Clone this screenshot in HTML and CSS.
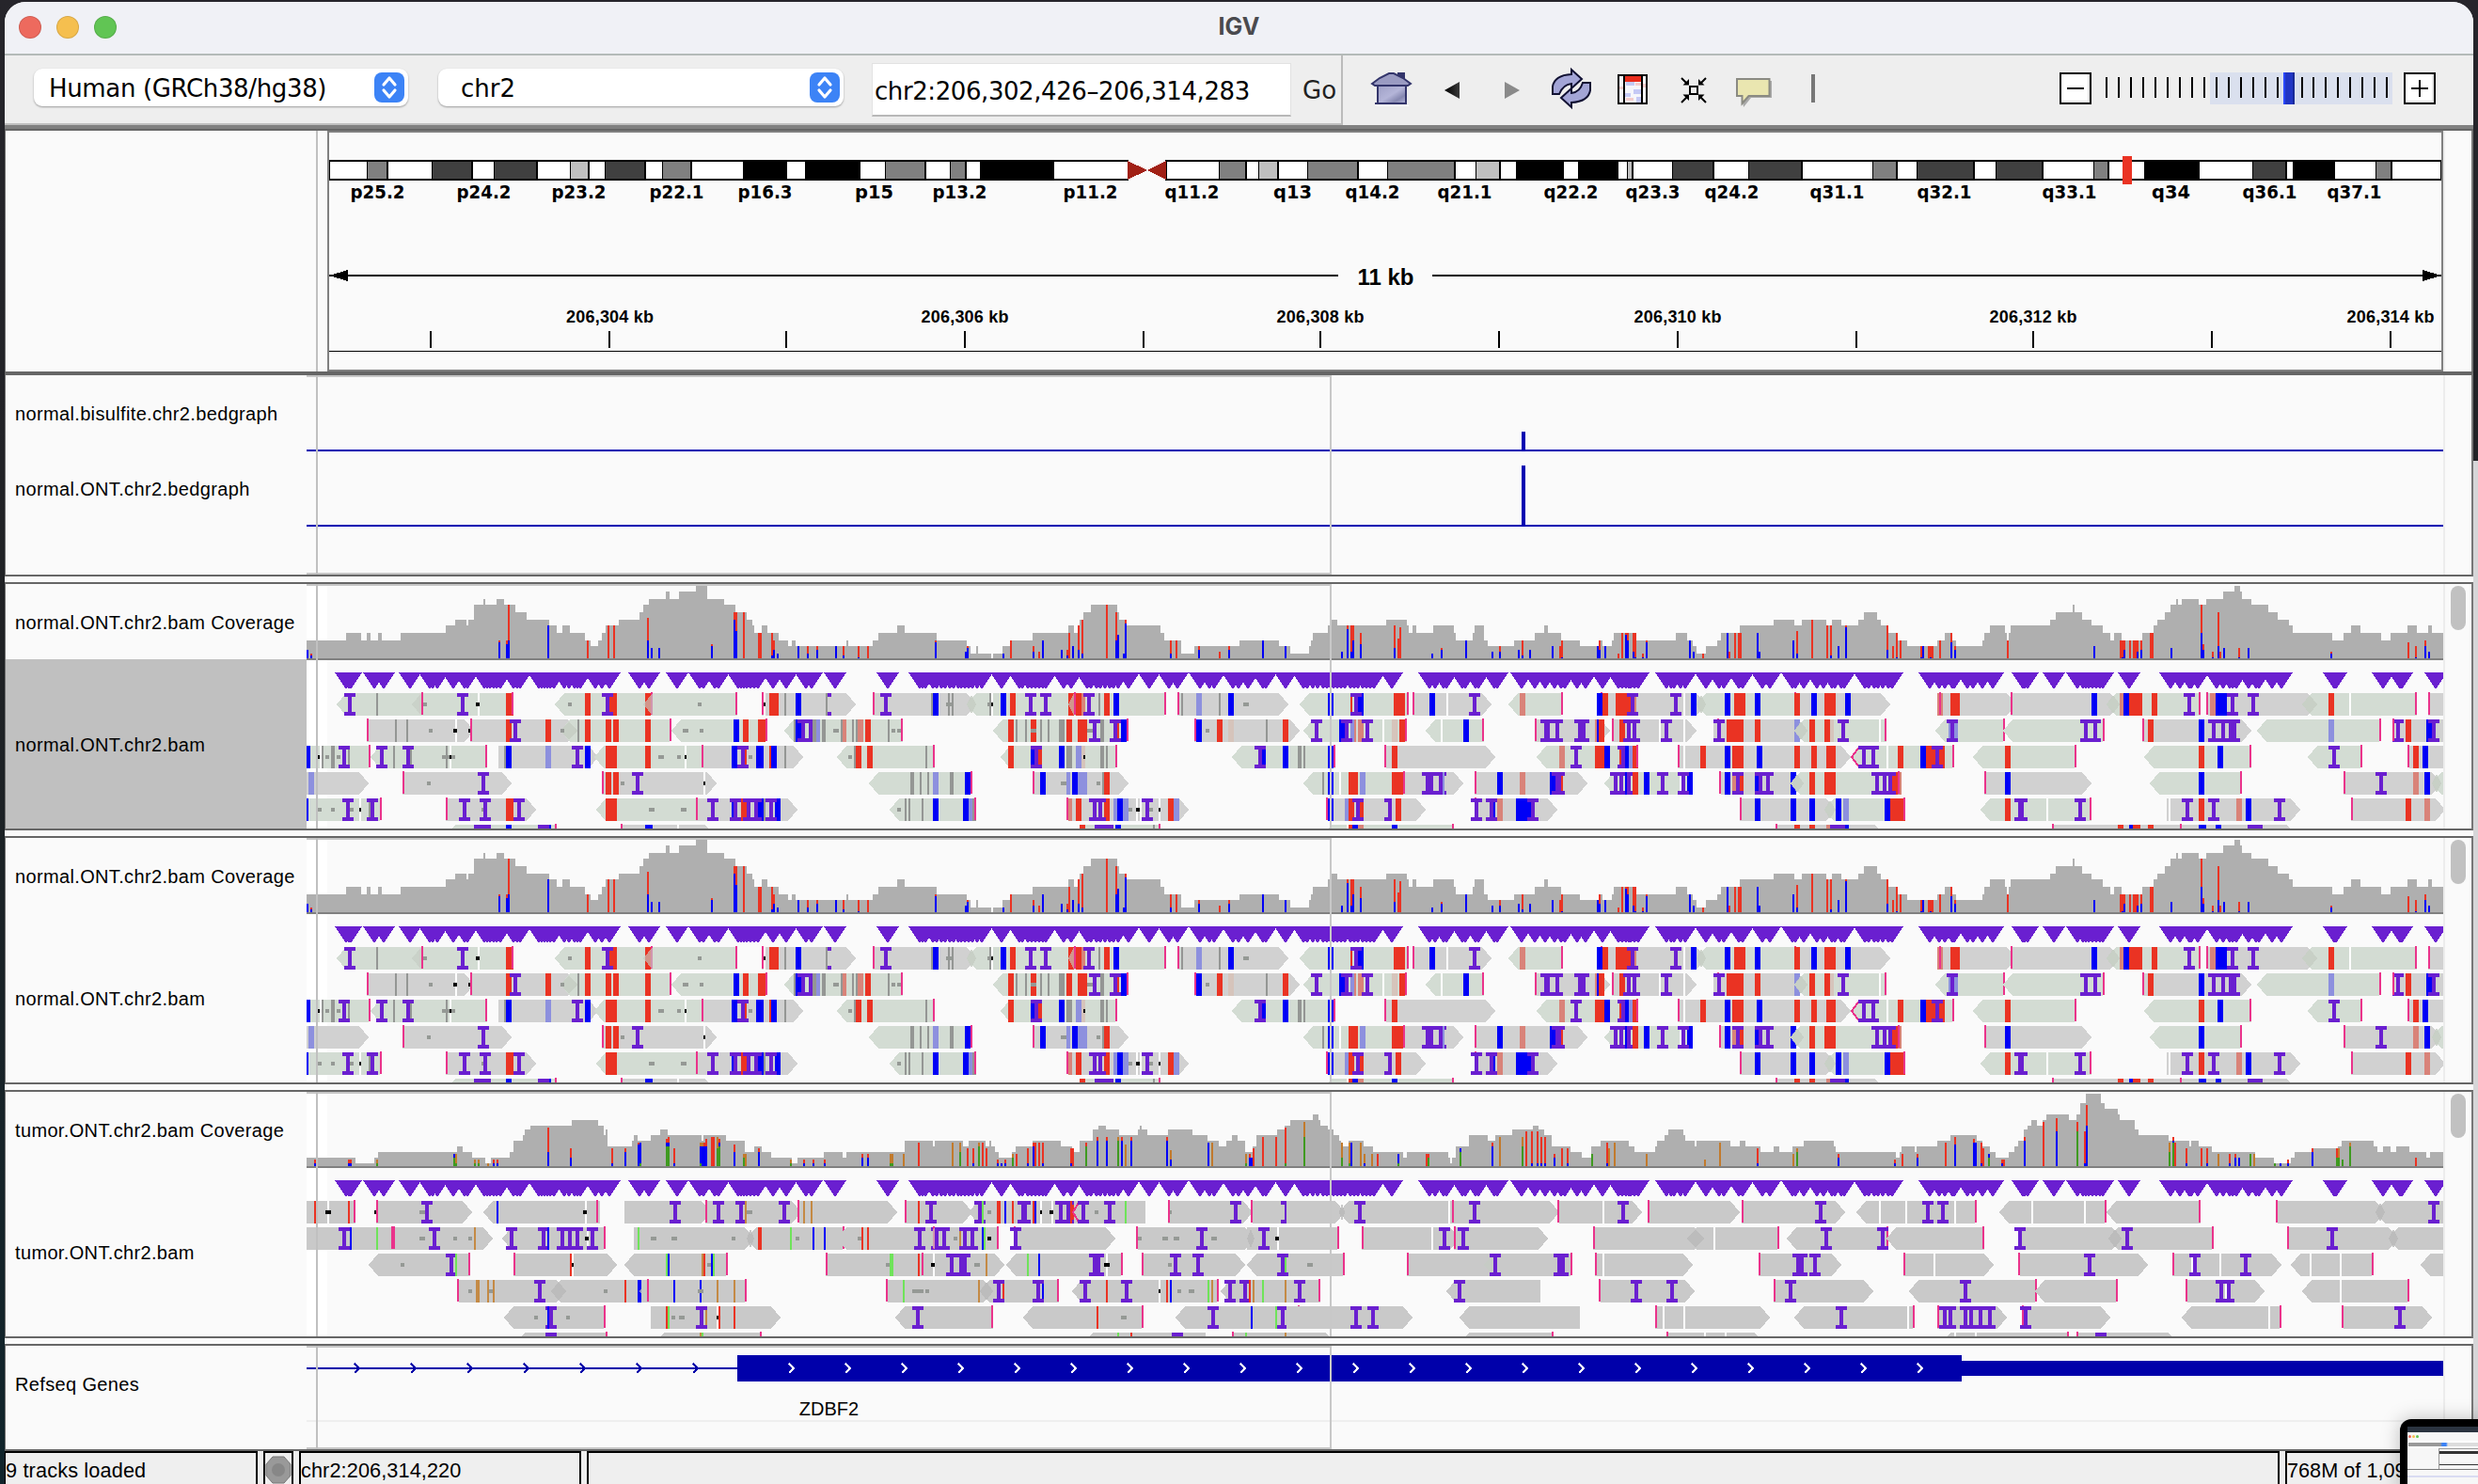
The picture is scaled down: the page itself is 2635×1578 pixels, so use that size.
FILE: index.html
```html
<!DOCTYPE html>
<html lang="en">
<head>
<meta charset="utf-8">
<title>IGV</title>
<link rel="stylesheet" href="styles.css">
</head>
<body>
<div class="window">
  <header class="titlebar">
    <div class="lights"><i class="light close"></i><i class="light min"></i><i class="light max"></i></div>
    <div class="title">IGV</div>
  </header>

  <div class="toolbar">
    <div class="locus-group">
      <div class="select genome"><span>Human (GRCh38/hg38)</span><svg class="stepper" width="32" height="32" viewBox="0 0 32 32"><rect width="32" height="32" rx="8"/><path d="M10 13l6-7 6 7M10 19l6 7 6-7"/></svg></div>
      <div class="select chrom"><span>chr2</span><svg class="stepper" width="32" height="32" viewBox="0 0 32 32"><rect width="32" height="32" rx="8"/><path d="M10 13l6-7 6 7M10 19l6 7 6-7"/></svg></div>
      <div class="locus"><span>chr2:206,302,426–206,314,283</span></div>
      <div class="go">Go</div>
    </div>
    <svg class="icons" width="520" height="72" viewBox="1430 59 520 72">
      <defs>
        <linearGradient id="wall" x1="0" y1="0" x2="1" y2="1"><stop offset="0" stop-color="#9fa0c6"/><stop offset=".5" stop-color="#b4b5d8"/><stop offset=".75" stop-color="#8587b0"/><stop offset="1" stop-color="#b4b5d8"/></linearGradient>
        <linearGradient id="dark" x1="0" x2="1"><stop offset="0" stop-color="#000"/><stop offset="1" stop-color="#3a3a3a"/></linearGradient>
      </defs>
      <path d="M1486 77h8v14h-8z" fill="#33356b"/>
      <path d="M1459 89l8-6 10-5h5l10 5 8 6-3 2h-35z" fill="#9a9bc2" stroke="#33356b" stroke-width="2"/>
      <path d="M1465 91h30v19h-30z" fill="url(#wall)" stroke="#33356b" stroke-width="2"/>
      <path d="M1462 110h34" stroke="#33356b" stroke-width="2"/>
      <path d="M1464 112.500h34" stroke="#fff" stroke-width="1"/>
      <path d="M1536 96l16-9v18z" fill="url(#dark)"/>
      <path d="M1616 96l-16-9v18z" fill="#8a8a8a"/>
      <g stroke="#111133" stroke-width="2" fill="#a3a5d6" stroke-linejoin="miter">
        <path d="M1651 100v-8q2-12 20-13v-5l11 10-11 10v-5q-9 1-13 11z"/>
        <path d="M1691 88v8q-2 12-20 13v5l-11-10 11-10v5q9-1 12-11z"/>
      </g>
      <rect x="1721" y="80" width="30" height="30" fill="#f6f6fb" stroke="#000" stroke-width="2"/>
      <path d="M1729 87h9v4h-9zM1737 95h8v5h-8zM1740 103h5v6h-5zM1728 99h6v4h-6z" fill="#c5c9f5"/>
      <path d="M1729 104h8v3h-8zM1739 88h6v3h-6zM1722 92h4v3h-4zM1747 89h3v4h-3z" fill="#f3cdcd"/>
      <path d="M1728 81h17v6h-17z" fill="#ea2c1c"/>
      <path d="M1727 80v30M1746 80v30" stroke="#000" stroke-width="2"/>
      <g stroke="#000" stroke-width="2" fill="none"><rect x="1797" y="92" width="8" height="8"/><path d="M1788 83l6 6M1814 83l-6 6M1788 109l6-6M1814 109l-6-6"/></g>
      <path d="M1796 84v6.500h-6.500zM1806 84v6.500h6.500zM1796 107v-6.500h-6.500zM1806 107v-6.500h6.500z" fill="#000"/>
      <path d="M1849 86h35v18h-22l-8 10z" fill="#aaa"/>
      <path d="M1847 84h34.500v18h-22l-7 8v-8h-5.500z" fill="#eae6b0" stroke="#8a8a82" stroke-width="2"/>
      <rect x="1926" y="79" width="4" height="30" fill="#777"/>
    </svg>
    <div class="zoom">
      <div class="zbtn"><svg width="30" height="30"><path d="M6 15h18" stroke="#000" stroke-width="2"/></svg></div>
      <svg id="zoomScale" width="308" height="34" viewBox="2238 77 308 34"></svg>
      <div class="zbtn"><svg width="30" height="30"><path d="M6 15h18M15 6v18" stroke="#000" stroke-width="2"/></svg></div>
    </div>
  </div>

  <section class="header-panel">
    <div class="names"></div>
    <div class="ideogram"><svg id="ideogram" width="2246" height="252" viewBox="350 141 2246 252"></svg></div>
    <div class="gutter"></div>
  </section>

  <section class="panel bed">
    <div class="names"><div class="name n80">normal.bisulfite.chr2.bedgraph</div><div class="name n80">normal.ONT.chr2.bedgraph</div></div>
    <svg id="bed" width="2272" height="212" viewBox="326 399 2272 212"></svg>
    <div class="gutter"></div>
  </section>
  <section class="panel">
    <div class="names"><div class="name n80">normal.ONT.chr2.bam Coverage</div><div class="name rest selected">normal.ONT.chr2.bam</div></div>
    <svg class="bam normal" width="2272" height="260" viewBox="326 621 2272 260"></svg>
    <div class="gutter"><i class="thumb"></i></div>
  </section>
  <section class="panel">
    <div class="names"><div class="name n80">normal.ONT.chr2.bam Coverage</div><div class="name rest">normal.ONT.chr2.bam</div></div>
    <svg class="bam normal" width="2272" height="260" viewBox="326 621 2272 260"></svg>
    <div class="gutter"><i class="thumb"></i></div>
  </section>
  <section class="panel">
    <div class="names"><div class="name n80">tumor.ONT.chr2.bam Coverage</div><div class="name rest">tumor.ONT.chr2.bam</div></div>
    <svg class="bam tumor" width="2272" height="260" viewBox="326 621 2272 260"></svg>
    <div class="gutter"><i class="thumb"></i></div>
  </section>
  <section class="panel genes">
    <div class="names"><div class="name n82">Refseq Genes</div></div>
    <svg id="genes" width="2272" height="110" viewBox="326 1431 2272 110"></svg>
    <div class="gutter"></div>
  </section>

  <footer class="status">
    <div class="cell tracks">9 tracks loaded</div>
    <div class="cell led"><svg width="28" height="31"><path d="M8 1h12l7 8v12l-7 8H8l-7-8V9z" fill="#999" stroke="#777"/><circle cx="14" cy="15" r="7" fill="#878787"/></svg></div>
    <div class="cell position">chr2:206,314,220</div>
    <div class="cell message"></div>
    <div class="cell memory">768M of 1,096M</div>
  </footer>
</div>

<div class="side"></div>
<div class="preview">
  <div class="pv-screen"><div class="pv-menu"></div><div class="pv-lights"><i></i><i></i><i></i></div><div class="pv-bar"></div><div class="pv-ideo"></div><div class="pv-rows"></div></div>
</div>
<script src="tracks.js"></script>
</body>
</html>
```
FILE: styles.css
```css
* { box-sizing: border-box; }
body {
  margin: 0;
  width: 2635px;
  height: 1578px;
  overflow: hidden;
  position: relative;
  background: linear-gradient(#26252b 0, #1f2124 700px, #10242b 1578px);
  font-family: "Liberation Sans", Arial, sans-serif;
  color: #000;
}
svg { display: block; }
.window {
  width: 2625px;
  height: 1576px;
  margin: 2px 5px 0;
  display: flex;
  flex-direction: column;
  background: #fafafa;
  border-radius: 22px 22px 0 0;
  overflow: hidden;
}
.titlebar {
  height: 57px;
  flex: none;
  padding-bottom: 2px;
  background: #f0f1f6;
  border-bottom: 2px solid #b4bab8;
  display: grid;
  grid-template-columns: 1fr auto 1fr;
  align-items: center;
}
.lights { display: flex; gap: 16px; padding-left: 15px; }
.light { width: 24px; height: 24px; border-radius: 50%; border: 1px solid rgba(0, 0, 0, .12); }
.close { background: #ed6a5e; }
.min { background: #f5bf4f; }
.max { background: #61c554; }
.title { font: 700 25px Inter, sans-serif; line-height: 29px; color: #4a4a4e; }

.toolbar {
  height: 80px;
  flex: none;
  display: flex;
  background: #eee;
  border-bottom: 2px solid #666;
  box-shadow: inset 0 -4px #808080;
}
.locus-group {
  width: 1423px;
  height: 74px;
  display: flex;
  align-items: center;
  padding: 0 0 4px 31px;
  border-right: 2px solid #bbb;
  border-bottom: 2px solid #c0c0c0;
  font: 26px "DejaVu Sans", sans-serif;
}
.select {
  height: 40px;
  display: flex;
  align-items: center;
  justify-content: space-between;
  padding-right: 4px;
  background: #fff;
  border-radius: 9px;
  box-shadow: 0 1px 2px rgba(0, 0, 0, .35);
}
.select span { padding-top: 2px; }
.genome { width: 398px; padding-left: 16px; margin-right: 32px; letter-spacing: -.35px; }
.chrom { width: 431px; padding-left: 24px; margin-right: 30px; }
.stepper rect { fill: #3c83f6; }
.stepper path { fill: none; stroke: #fff; stroke-width: 3.2; stroke-linecap: round; stroke-linejoin: round; }
.locus {
  width: 446px;
  height: 57px;
  margin-top: 4px;
  display: flex;
  align-items: center;
  padding: 4px 0 0 2px;
  background: #fff;
  border: 1px solid #e2e2e2;
  border-bottom: 2px solid #b8b8b8;
  letter-spacing: -.42px;
  white-space: nowrap;
}
.go { margin: 6px 0 0 12px; color: #222; }
.icons { margin-left: 2px; }
.zoom { margin-left: auto; padding: 18px 40px 0 0; display: flex; gap: 14px; align-items: flex-start; }
.zoom svg { flex: none; }
.zbtn { width: 34px; height: 34px; background: #fff; border: 2px solid #000; box-shadow: inset -2px -2px #e4e4e4; }
.zbtn + svg { margin-right: -4px; }

.header-panel, .panel {
  flex: none;
  display: grid;
  border-left: 1px solid #707070;
  border-right: 2px solid #777;
}
.header-panel { height: 256px; grid-template-columns: 332px 1fr 30px; }
.header-panel .names { border-right: 2px solid #c0c0c0; }
.ideogram { margin-left: 10px; border: 2px solid #808080; }
.panel {
  height: 264px;
  grid-template-columns: 320px 2272px 1fr;
  border-top: 2px solid #666;
  border-bottom: 2px solid #666;
  margin-bottom: 6px;
}
.panel.bed { height: 218px; border-top-width: 4px; }
.panel.genes { height: 114px; margin-bottom: 0; }
.name {
  padding: 2px 0 0 10px;
  font-size: 20px;
  letter-spacing: .35px;
  display: flex;
  align-items: center;
  white-space: nowrap;
}
.n80 { height: 80px; }
.n82 { height: 82px; padding-top: 1px; }
.rest { height: 180px; }
.selected { background: #c0c0c0; }
.gutter { border-left: 2px solid #ececec; }
.thumb { display: block; width: 16px; height: 47px; margin: 2px 0 0 6px; border-radius: 8px; background: #c1c1c1; }

.status {
  flex: 1;
  display: flex;
  gap: 6px;
  background: #efefef;
  font-size: 21.7px;
  overflow: hidden;
}
.cell { border: 2px solid #000; border-bottom: 0; height: 40px; padding-top: 6px; white-space: nowrap; }
.tracks { width: 269px; border-left-width: 1px; }
.led { width: 32px; padding-top: 3px; }
.position { width: 300px; letter-spacing: .1px; }
.message { flex: 1; }
.memory { width: 200px; }
.tracks { letter-spacing: .15px; }

.side { position: absolute; left: 2630px; top: 490px; width: 5px; height: 1088px; background: #d6d6d8; }
.preview {
  position: absolute;
  left: 2552px;
  top: 1509px;
  width: 90px;
  height: 80px;
  padding: 8px 0 0 8px;
  background: #000;
  border-radius: 12px 0 0 0;
  box-shadow: 0 0 20px rgba(0, 0, 0, .25);
}
.pv-screen { background: #f7f7f7; height: 70px; }
.pv-menu { height: 6px; background: #2b3440; }
.pv-lights { display: flex; gap: 1px; padding: 3px 1px; }
.pv-lights i { width: 3px; height: 3px; background: #ed6a5e; border-radius: 50%; }
.pv-lights i + i { background: #f5bf4f; }
.pv-lights i + i + i { background: #61c554; }
.pv-bar { height: 8px; margin-left: 1px; background: linear-gradient(90deg, #999 0 34px, #3c83f6 36px 40px, #ddd 42px); border: solid #fff; border-width: 2px 0; }
.pv-ideo { height: 22px; margin-left: 33px; border-left: 1px solid #999; background: linear-gradient(#999 0 1px, transparent 1px 3px, #333 3px 6px, transparent 6px 17px, #333 17px 18px, transparent 18px); }
.pv-rows { height: 20px; border-top: 1px solid #777; background: linear-gradient(transparent 6px, #d9dcf2 6px 8px, transparent 8px); }

.band-label { font: 700 20px "DejaVu Sans", sans-serif; text-anchor: middle; }
.tick-label { font: 700 18px "Liberation Sans", sans-serif; text-anchor: middle; }
.span-label { font: 700 24px "Liberation Sans", sans-serif; text-anchor: middle; }
.gene-label { font: 20px "Liberation Sans", sans-serif; text-anchor: middle; }
```
FILE: tracks.js
```js
const rect = (x, y, w, h, fill, extra = '') =>
  `<rect x="${x}" y="${y}" width="${w}" height="${h}" fill="${fill}" ${extra}/>`;
const svg = (el, body) => { el.innerHTML = `<g shape-rendering="crispEdges">${body}</g>`; };
const even = v => Math.round(v / 2) * 2;

/* ---------- zoom slider ---------- */
{
  let s = rect(2350, 77, 194, 34, '#dae0ee');
  for (let i = 0; i < 24; i++) s += rect(Math.round(2239 + i * 12.97), 82, 2, 22, '#000');
  s += rect(2428, 77, 12, 34, '#2035c4') + rect(2428, 77, 2, 34, '#2a48ff') + rect(2438, 77, 2, 34, '#182a98');
  svg(document.getElementById('zoomScale'), s);
}

/* ---------- ideogram and ruler ---------- */
{
  const tone = { a: '#c0c0c0', b: '#808080', c: '#404040', d: '#000' };
  const bands = 'b390-412 c459-502 c525-571 a606-626 c643-686 b704-735 d789-837 d855-915 b941-984 b1010-1027 d1041-1121 b1296-1325 a1338-1359 b1390-1444 b1475-1547 a1569-1595 d1611-1663 d1677-1721 a1730-1736 c1778-1822 c1859-1916 b1991-2017 c2038-2099 c2122-2172 b2226-2242 d2279-2339 c2395-2431 d2437-2483 b2526-2543';
  const labels = 'p25.2:401 p24.2:514 p23.2:615 p22.1:719 p16.3:813 p15:929 p13.2:1020 p11.2:1159 q11.2:1267 q13:1374 q14.2:1459 q21.1:1557 q22.2:1670 q23.3:1757 q24.2:1841 q31.1:1953 q32.1:2067 q33.1:2200 q34:2308 q36.1:2413 q37.1:2503';
  let s = rect(350, 170, 850, 22, '#000') + rect(351, 172, 848, 18, '#fff')
        + rect(1239, 170, 1357, 22, '#000') + rect(1241, 172, 1354, 18, '#fff');
  for (const [, t, a, b] of bands.matchAll(/([a-d])(\d+)-(\d+)/g)) {
    const edge = t === 'd' ? 0 : 1;
    s += rect(+a - edge + 1, 171, b - a + 2 * edge - 1, 20, '#000');
    if (t !== 'd') s += rect(+a + 1, 172, b - a - 2, 18, tone[t]);
  }
  s += '<path d="M1199 171l21 10-21 10zM1240 171l-20 10 20 10z" fill="#a12015"/>' + rect(2257, 166, 10, 30, '#ea3323');
  for (const l of labels.split(' ')) {
    const [t, x] = l.split(':');
    s += `<text class="band-label" x="${+x + 0.5}" y="211" textLength="${t.length > 3 ? 58 : 41}" lengthAdjust="spacingAndGlyphs">${t}</text>`;
  }
  s += rect(350, 292, 1073, 2, '#000') + rect(1523, 292, 1073, 2, '#000')
     + '<path d="M350 293l20-6v12zM2596 293l-20-6v12z"/>'
     + '<text class="span-label" x="1473.5" y="303">11 kb</text>' + rect(350, 373, 2246, 1, '#000');
  for (const x of [457, 647, 835, 1025, 1215, 1403, 1593, 1783, 1973, 2161, 2351, 2541]) s += rect(x, 352, 2, 18, '#000');
  [648.5, 1026, 1404, 1784, 2162, 2542].forEach((x, i) => {
    s += `<text class="tick-label" x="${x}" y="343" textLength="93">206,${304 + 2 * i} kb</text>`;
  });
  svg(document.getElementById('ideogram'), s);
}

/* region-of-interest guides drawn over each track panel */
const guides = (y, h) => rect(336, y, 2, h, '#c0c0c0') + rect(1414, y, 2, h, '#c8c8c8');

/* ---------- bedgraph ---------- */
svg(document.getElementById('bed'),
  rect(326, 399, 1089, 2, '#c6c6c6') + rect(326, 609, 1089, 2, '#c6c6c6')
  + rect(326, 478, 2272, 2, '#0000b2') + rect(326, 558, 2272, 2, '#0000b2')
  + rect(1618, 459, 4, 20, '#0000b2') + rect(1618, 495, 4, 64, '#0000b2') + guides(399, 212));

/* ---------- genes ---------- */
{
  let s = rect(326, 1431, 1089, 2, '#c6c6c6') + rect(326, 1539, 1089, 2, '#c6c6c6') + rect(326, 1510, 2272, 2, '#efefef')
    + rect(326, 1454, 458, 2, '#0000aa') + rect(784, 1441, 1302, 28, '#0000aa') + rect(2086, 1447, 512, 16, '#0000aa');
  const chev = (x, c) => `<path d="M${x - 3} 1450l5 5-5 5" fill="none" stroke="${c}" stroke-width="2"/>`;
  for (let x = 380; x <= 740; x += 60) s += chev(x, '#0000aa');
  for (let x = 842; x <= 2043; x += 60) s += chev(x, '#fff');
  s += '<text class="gene-label" x="881.5" y="1505">ZDBF2</text>' + guides(1431, 110);
  svg(document.getElementById('genes'), s);
}

/* ---------- alignment data ----------
   Each block covers one stretch of the locus: x0 = its left edge, k = pixels per unit.
   cov  : "x level" steps
   bars : x, then colour + top of that colour
   tips : insertion marker positions
   rows : reads (G/N/T + direction + span) followed by their marks */
const normal = [
  { x0: 320, k: .38265, end: 1516,
    cov: '16 213 125 189 167 213 183 189 193 213 214 189 225 213 277 189 402 165 429 147 460 165 465 147 481 99 507 81 512 99 544 81 564 99 596 123 627 147 690 165 711 189 727 165 747 189 789 213 805 231 826 213 836 189 847 165 883 147 941 123 951 99 967 81 1014 57 1024 81 1051 57 1098 39 1129 81 1176 99 1207 123 1239 147 1254 165 1260 189 1281 165 1296 189 1328 213 1354 231 1364 213 1375 231',
    bars: '16b243 26r255b261 549r213b219 570r213b225 575r99b213 685b165 794r213 852r165 868r165 962r141b213 972b237 993b237 1139r225b231 1202r123b147 1207r123b183 1228r123 1270r189 1275r189 1307r189b261 1312r213b243 1322b255 1380b231 1406r231b255 1432r231b243 1484b231 1505r231b261',
    tips: '126 132 139 204 231 304 358 367 378 424 455 462 510 518 526 535 543 553 590 600 610 660 670 678 685 693 703 733 745 760 768 775 818 836 858 941 966 1046 1108 1118 1150 1160 1215 1223 1231 1240 1250 1260 1270 1313 1349 1403 1420 1485',
    rows: [
      'G<100-592 k209 i136 i449 w491 d335-350 c487-496 r570-591 p332 o308-335 p588 G<706-1210 r789-805 r857-878 i852 r956-973 d742-753 d1103-1113 p970 o953-975 p1205 N>1279-1542 w1286 c1285-1291 r1301-1328 k1343 b1375-1390 k1458 i1479 b1484-1495 r1500-1516 p1278',
      'N>181-480 k261 k293 d355-366 w429 c425-433 c465-470 p181 N>470-768 r570-585 i596 r679-695 p468 G<720-1025 O720-768 d721-731 k768 r789-805 r847-862 r868-883 r956-972 p1022 G<1030-1293 d1061-1077 d1108-1118 b1202-1218 r1228-1244 r1270-1291 p1289 G<1343-1516 b1375-1390 k1369 i1396 i1417 k1422-1430 l1433-1443 k1448-1458 d1479-1495 k1500 s1505-1516',
      'G|16-190 b16-26 k57 k84-94 w50 c47-52 d68-78 d99-110 k131 i120 p186 G<193-515 i224 k256 k303 i298 k402 d392-413 w413 c412-418 d418-429 p510 N>549-826 k564 b570-585 l679-695 i768 b789-805 G<816-1118 r847-878 r956-972 d993-1009 d1045-1055 w1066 c1065-1071 N>1118-1396 b1197-1213 r1234-1239 i1228 d1244-1254 b1265-1286 b1301-1322 r1301 k1343 p1111-1120 G<1490-1516',
      'N>16-188 l21-37 N>281-585 d350-361 i507 p281 N>836-1155 r847-862 r868-883 d888-899 i935 w1119 c1118-1124 p835',
      'G|16-222 b16-21 d47-57 d84-94 d136-146 i130 w162 c161-167 k188 i198 p217 N>402-653 i454 d502 i512 r570-591 i606 p401 G<821-1098 r847-878 d967-983 d1056-1071 N>1098-1380 i1145 b1197-1203 r1223-1239 i1207 b1270-1286 i1244 i1267 b1317-1333 k1286 i1306 p1096',
      'G<400-712 i494 i510 d533-549 b570-585 i675 b690 p708 N>888-1150 w1046 b956-977 p886'] },
  { x0: 900, k: .38265, end: 1516,
    cov: '0 213 5 231 73 213 89 189 141 165 162 189 251 213 335 231 345 255 361 231 366 255 402 270 407 255 434 231 455 213 517 189 617 165 632 189 642 165 648 147 659 123 679 99 753 123 758 147 779 165 873 189 883 213 930 255 967 231 1092 213 1202 231 1233 255 1286 231 1291 213 1296 189 1338 165 1348 147 1364 165 1500 147',
    bars: '31r231b267 57r231 246r213b219 329b249 335r231b237 434b255 455r213 517r231b249 533r249 544b213 596b243 612r243b261 617r189 627b231 643r165b243 653r147b255 721r99 747r123b213 752b195 768b255 774r147b159 899r213b255 915r213 977r231b243 1035r249 1061r231b243 1155b213 1218b231 1375b249 1390r165b177 1401r165b249 1406r165b213 1427r189b225',
    tips: '116 205 212 220 240 252 263 275 287 298 310 320 330 340 350 362 377 430 480 490 505 515 525 535 545 555 603 625 668 680 695 705 718 733 743 755 783 842 897 920 983 1010 1022 1075 1090 1115 1158 1165 1220 1270 1280 1295 1310 1325 1335 1345 1355 1365 1375 1385 1400 1412 1422 1435 1445 1455 1465 1515',
    rows: [
      'N>-40-26 N>72-360 i110 k235 b240-256 k282 k293 d277-293 p71 G<336-884 O336-361 k397 w404 c402-408 d392-400 b429-444 r455-470 i512 i554 r617-632 r638-653 s653-664 i674 k700 r716-731 b742-758 p630 o617-635 p881 N>920-1228 k930 l972-988 k1035 b1061-1077 d1103-1119 p918 G<1260-1516 b1338-1353 b1422-1437 r1401 i1417',
      'G|0-157 k16 k26 s31-47 r52-68 k115 d125-136 d141-152 p154 G<408-780 r449-465 k470 k497 r512-528 d512-528 k538 k559 k591-606 r612-627 r643-669 k706-716 d669-685 i690 r753 b763-779 i748 p778 N>966-1260 b972-988 d998-1009 r1030-1045 q1061-1077 k1166 r1213-1228 p965 G<1270-1516 i1306 b1369-1385 l1400-1411 i1391 s1411-1416 s1422-1437 i1448 w1490',
      'G|0-248 d5-16 r21-42 k21 r57-73 k220 p243 G<429-748 r449-465 b512-523 r533-544 i528 b591-606 k612-627 l638-653 q653-664 c658-664 k706-716 k721 p745 G<1072-1359 b1155-1166 i1150 b1213-1228 k1254-1265 k1270 b1338-1353 p1356 N|1499-1516 p1497',
      'G<63-347 k178-188 k204 k225 l240-256 k287-298 b329-345 p343 N>517-784 b538-554 d596-612 l612-622 b627-643 l643-669 d695-706 k711 r716-731 p515 G<1270-1516 k1322 b1338-1353 w1370 r1396-1422 l1427-1443',
      'G<120-361 d141-152 k162 k173 k209 b240-256 b324-340 l340-350 k350-360 p358 N>616-951 s617-627 r638-653 r716-731 i690 i706 l742-753 b753-768 l768-784 d784 w806 c803-820 w815 d841-852 i836 w868 c868-873 r894-909 l909-925 p614 N|1338-1516 b1338-1353 l1385-1396 r1396-1411 r1427-1437 i1422 i1510 p1335',
      'G<640-873 r648-664 i708 i724 b747-763 k852 p870 G<1320-1516 w1390 r1396-1406 b1406-1422 s1422-1437'] },
  { x0: 1480, k: .38265, end: 1463,
    cov: '0 147 42 165 47 189 57 165 68 189 115 165 172 189 178 213 225 189 230 165 256 213 267 231 340 213 397 189 423 165 434 189 470 213 523 231 575 213 585 231 612 213 617 189 679 213 789 189 821 213 836 231 847 255 873 231 904 213 915 189 967 165 1061 147 1119 165 1139 147 1207 165 1223 147 1249 165 1296 147 1312 123 1348 147 1359 165 1380 189 1406 213 1432 231',
    bars: '5r165b237 16r207 21r171 110b255 136r237b243 204b213 277b249 298r231b249 350b243 361r213b261 382b243 444b231 465r231 470r213b267 570b231 575r213b243 591b231 627r255 638r189 648r189b195 653r189b213 669r189b249 674r189b267 695r255b267 706r213b219 826b213 836b249 862r255 930b189 936r249 951r189 962r189 967r189 1014b189 1019b249 1113b213 1124r183b255 1166r147 1207r165 1218r165b261 1239b231 1260r165b171 1375r165b243 1390r231 1401r189b267 1411r213',
    tips: '0 105 120 143 152 195 205 232 240 285 293 360 398 425 452 470 480 515 538 585 630 640 650 658 665 674 684 762 775 785 803 815 873 910 923 965 975 1030 1050 1112 1120 1145 1180 1200 1222 1230 1250 1257 1315 1325 1340 1350 1365 1380 1390',
    rows: [
      'G|0-48 r5-37 p44 N>55-277 b105-120 w152 i230 p55 G<324-473 s355-371 p468 p578 N>570-873 b570-585 r585-601 r622-664 s674 i669 i789 w810 b831-847 G<847-1121 O847-873 b925-941 r951-983 b1009-1024 p1121 N>1121-1385 r1119-1134 b1166-1181 r1202-1233 b1260-1275',
      'G|0-42 q0-16 r21-37 p39 G<94-257 w136 b199-214 p253 N>397-606 i430 i436 i460 i523 i533 s565 b570 r575-591 p396 N>611-847 r632-648 i658 i674 w742 i763 w810 p610 p902 N>894-1155 r930-977 i909 r1009-1024 l1119-1134 G<1119-1376 O1119-1155 r1160-1176 r1202-1218 q1218-1228 i1254 w1354 p1372',
      'N>0-287 r0-16 G<402-685 s465-480 i512 r564-591 b591-606 r632-638 l658-669 r669-684 i643 b650-658 p677 N>794-1276 w810 r857-873 b925-941 r946-977 b1014-1030 r1119-1134 r1166-1181 r1207-1233 p792 G<1275-1463 x1275-1301 i1312 i1338 w1375 r1406-1422',
      'N>0-199 r0-31 p29 i100 i108 i136 l141 N>229-544 b293-308 s355-371 b439-455 r470 i462 i465 p228 G<591-836 i622 i640 i658 b648 r669-685 b700-716 i752 w799 b821-836 i810 N>913-1145 b925-941 s946-957 r967-977 i961 b1009-1020 i1024 i1045 b1108-1124 p912 G<1108-1416 O1108-1145 r1160-1176 r1202-1233 s1406-1416 r1390-1406 i1348 i1367 i1385 p1404',
      'N>0-94 r10-26 p228 N>229-460 i235 b282 i277 s293-308 b345-387 i392 N>966-1233 b1009-1024 b1108-1124 b1160-1176 p965 G<1202-1427 O1202-1233 b1233-1249 l1254-1270 b1369-1385 r1385-1427 p1424',
      'G|0-170 b0-16 p165 N>1066-1370 r1119-1134 r1160-1176 s1207-1223 i1236 i1250 b1260-1270 p1064'] },
  { x0: 2040, k: .37946, end: 1470,
    cov: '0 231 53 213 74 189 95 213 105 231 179 213 184 189 200 165 242 189 248 213 253 189 258 165 369 147 385 123 432 99 437 123 459 147 485 165 517 189 538 213 548 189 569 213 627 189 659 165 669 147 690 123 706 99 722 81 727 99 738 81 785 99 806 81 854 57 885 39 901 57 907 81 933 99 980 123 1007 147 1038 165 1049 189 1160 213 1191 189 1212 165 1239 189 1297 213 1323 189 1370 165 1397 189 1428 165 1439 189',
    bars: '5r231b267 10b231 26r231 31r231b267 37r231 58r213 90r189b219 100r231b243 248r213 490b231 564r213 569r213b267 574r213b243 590r213 601r213 606r213 611r213b249 622r213b243 648r189 653r189 706b237 791r99b189 796r225b243 822r249b267 838r123b231 843r249 854b237 896r237b267 922b237 1154r249b255 1370r219 1391r231b267 1418r213b231 1428b249',
    tips: '31 58 75 95 100 138 152 180 207 292 299 306 380 445 460 469 478 487 498 508 516 590 707 732 760 765 782 835 855 872 880 890 925 945 955 990 1018 1165 1170 1301 1350 1355 1450',
    rows: [
      'N>55-273 s55-69 p56 r90-116 N>258-565 b485-501 p256 G<528-788 O528-564 s564-574 b574-590 r590-627 r653-669 i759 p783 N>811-1117 s817-833 b833-864 i880 i938 p809 G<1076-1397 O1076-1117 r1149-1165 w1207 p1394 N|1428-1470 p1426',
      'G<47-239 l84-90 l100-110 i95 p235 G<239-517 i469 i496 p514 N>627-933 r643-659 b785-801 i828 i854 i873 i885 p625 G<949-1293 l1149-1165 p1289 N|1328-1470 i1344 r1365-1381 b1423-1439 i1444 p1326',
      'G|0-97 b5-21 r21-74 i52 p93 G<153-439 r242-258 p435 G<632-935 r785-801 b838-854 p930 G<1091-1240 i1165 p1236 N|1376-1470 r1386-1402 b1413-1428 p1373',
      'N>184-485 b242-258 p182 G<648-903 b785-801 p899 N>1191-1464 i1296 s1386-1402 b1418-1434 p1189 G<1440-1470 O1440-1465',
      'G<175-487 r242-258 i284 i291 w358 i453 p482 N|697-702 N>706-1070 i754 r785-801 i828 s890-907 b917-933 i1012 N>1212-1475 r1365-1381 s1418-1434 p1210',
      'N|374-738 r559-574 b590-601 r601-622 r643-659 p372 N>738-1060 b785-806 b833-849 i937 i949 p735'] }
];

const tumor = [
  { x0: 320, k: .70153, end: 1540,
    cov: '9 243 83 261 111 243 117 225 237 207 245 225 259 243 279 261 288 243 316 225 322 189 336 171 339 153 348 141 411 123 450 141 459 171 462 153 465 207 502 189 505 171 510 189 530 171 545 153 556 171 607 189 610 171 644 189 673 225 687 207 698 225 713 243 743 261 753 243 793 225 821 243 827 225 915 189 958 207 961 189 1003 207 1012 189 1038 207 1043 189 1046 207 1052 225 1058 243 1078 225 1083 207 1109 189 1152 207 1168 225 1180 189 1200 153 1209 141 1220 153 1241 171 1269 153 1272 141 1274 153 1283 171 1314 153 1351 171 1375 189 1391 207 1404 189 1411 171 1420 189 1432 225 1443 207 1448 171 1480 153 1492 141 1500 123 1534 105',
    bars: '20r249b261 71r249b261 74r249b261 114o249v261 231b231v243 234o231v261 262o249v261 267o249v261 282o261 291r249b261 296r249b261 373r147b225 408r213b243 470r213b261 490r213b225 510r195b201 513b195v261 553r183b195v207 556r177b195v207 564r213b261 604o195b207v261 607o195b207 610r195b207 613r183b207 621r177 624r177 630o177v213 633r183b195v207 656r201b225 670o231v243 673o231 694r213b225 741o249v261 761r249b261 775r249b261 793r249b261 850r231b243 858r231b243 892o231v261 895o231v261 912o231 935r195 986o195 998o195v225 1009r213 1018r213b261 1026o195v207 1032r195 1038r213 1055r249b261 1061b261 1066r249b261 1078o231v243 1083r231 1100r213b261 1109r195b207 1112r195 1118r195 1124r195b261 1166r213b261 1169r213 1190r195v207 1206r177b189 1220r177b189 1238o177v189 1244r177b189 1249o201 1258r177b189 1311r177b189 1318o219b249 1374b195 1380o195 1432o231v261 1437r231b243 1441b243 1443r213 1457r177 1478r177 1492r147v261 1520o129v177',
    rows: [
      'T|9-84 r20 w41 c38-46 r71 p81 T>113-259 c111-117 d180-188 i191 p113 T<277-452 b296 w430 c429-433 p449 T>490-621 i567 T>612-757 i632 d675-684 i667 e672 i733 p612 T>755-904 e761 e773 p754 T>915-1018 r936 i955 p914 T<1013-1280 i1030 v1033 d1040-1046 r1055-1061 b1066 r1078 r1110 i1095 i1099 b1113 w1121 c1119-1123 w1138 c1136-1140 r1168 i1152 i1163 r1166 x1169-1180 i1187 d1203-1209 i1225 v1249 T>1314-1442 d1315-1320 i1416 p1313 T|1442-1540 i1493 e1520 w1526 c1523-1528 p1441',
      'T>9-291 b75 i66 v115 p138-143 d180-188 i203 d231-237 d254-260 e263 T<305-460 i318 i367 b373 i396 i408 i419 w432 c430-435 i441 p458 T>505-686 v511 d530-539 d562-570 d653-659 T<676-822 O676-686 r694-698 v742 d750-755 b776 b793 p820 T<813-1058 d844-850 r850 r858 i937 i965 i975 e999 i1007 i1018 d989-995 b1033 v1035 c1040-1045 p957 o950-960 p1056 T>1080-1234 p1080 i1083 T>1268-1444 d1269-1273 d1306-1314 d1323-1331 i1366 d1380-1388 p1267 T|1435-1540 O1435-1444 i1460 w1480 c1477-1482',
      'T<103-257 d150-157 i229 v235 p255 T>322-480 r409 w411 c410-413 p321 T<490-645 v554 b556 e607 r610-614 d616-620 b622 v625 p643 T>795-957 d887-891 v892-898 r936 p942 p794 T>943-1066 w959 c956-961 i987 i1000 i1006 d1021-1029 e1039 T<1069-1244 v1101 b1118 i1204 i1208 w1221 c1218-1225 p1242 T>1274-1432 d1314-1320 i1325 i1360 p1273 T<1434-1540 v1492 i1488 d1525-1534',
      'T>239-402 d254-260 e265-271 e282 d285-290 e291 i362 T<380-526 O380-402 d459-465 r491 b511-516 o514-526 p524 T|526-673 b565 b605 d602-609 e629 e657 p672 p238 T>889-1050 v913 d927-944 d947-953 e1027 p888 T<1030-1150 O1030-1050 r1064 i1057 b1124 i1117 p1147 T<1169-1389 i1188 r1221 i1251 w1301 c1299-1304 r1312 b1317 d1329-1334 d1346-1354 v1374 e1380 p1387 T<1395-1544 i1408 i1431 r1437 e1443 v1458 e1492 i1514 p1541',
      'T<308-460 d353-359 i379 b374 d402-408 p458 T>530-727 r554 v557 d562-567 d573-582 e614 i607 w631 c629-633 r634 r657 T<901-1048 i935 p1045 T<1095-1275 r1207 d1243-1252 p1273 T<1326-1540 i1383 b1441 v1478 i1488 d1493-1497 w1508 p1510 d1525-1534',
      'T<325-465 i379 p463 T<535-699 e604 v607 p697 T<1187-1371 v1238 r1258 i1328 T|1411-1540 v1432 e1492 p1410'] },
  { x0: 1400, k: .78763, end: 1521,
    cov: '0 105 3 123 6 141 14 153 24 171 30 189 34 207 43 189 63 207 75 225 118 243 122 225 179 243 180 261 184 243 188 207 206 171 231 189 240 171 264 153 292 141 300 153 308 171 318 207 343 225 358 243 372 207 383 189 421 207 430 225 457 207 459 189 470 171 475 153 495 171 497 189 511 207 514 189 559 207 571 189 579 207 599 225 617 207 625 225 643 207 658 189 698 207 700 225 782 243 786 225 790 207 807 225 810 207 838 189 857 171 891 189 900 207 908 225 917 243 934 225 943 207 948 189 955 153 960 141 965 123 973 141 981 123 985 105 1016 123 1027 105 1030 69 1039 39 1059 69 1064 87 1082 105 1085 123 1105 153 1110 171 1150 189 1177 207 1181 189 1191 207 1209 225 1243 225 1267 243 1293 261 1315 243 1320 225 1343 213 1378 207 1385 189 1427 207 1433 225 1440 207 1451 225 1458 207 1475 225 1497 243 1503 225',
    bars: '33o195v243 43o195v261 46b195 58o195 63o231b261 73o231 81r231 110b231v261 148r231 150r231v243 193b213v225 236r195b207 246o177 277o177v207 281r159 289r159b261 297r159b261 302r177b261 307r177b261 320r231b243 331r213 338r213b261 371v231 390r195b261 394o213 402o195 445o231 522o249 544o195 594r213b261 643o231 648o213v225 703r231b243 780r249b261 790r231 811r231b243 849r195 862r177b201 886r183b195 890b195 897r195b261 900r213 907b231v243 924r249b261 927r249 955r177b189 980r129 997r117b159 1026r129v159 1035r159b261 1039r75b141 1150o195v225 1155r177b189v195 1158r195 1173r213b261 1194r213 1202r213b261 1217o231 1232r231b261 1240r231b243 1243b243 1259v231 1265o231 1293v261 1301b261 1311r249b261 1344r213b225 1376r213v243 1380o213v243 1383v249 1395o195v207 1483r243',
    rows: [
      'T>-40-38 T<31-184 O31-38 w179 i58 T>184-328 i213 p182 T>327-439 w387 i414 p326 T>447-572 p446 T>573-714 i680 p573 T<729-889 w760 w796 i825 i845 w861 p888 T<922-1065 w966 w1037 p1063 T<1067-1194 p1192 T>1297-1442 p1296 T<1430-1521 O1430-1442 i1508',
      'T|0-28 p27 T>61-193 w156 i172 p60 T>186-312 p185 i198 T>373-523 p373 T<501-622 O501-523 w536 p621 T<635-770 i688 p769 i764 T<770-902 p900 T>946-1088 i949 T<1069-1209 O1069-1088 i1094 p1208 T>1310-1461 i1371 p1309 T<1448-1521 O1448-1461',
      'T|0-36 p35 T|121-240 T<226-344 o226-238 i241 i328 i333 p121 p342 T>376-508 w387 p375 T>596-708 i649 i655 i673 p596 T>792-914 w834 p791 T>949-1122 i1043 p948 T>1156-1303 w1180 i1185 w1220 i1254 p1155 T<1315-1425 w1340 w1382 p1424 T<1491-1521',
      'p2 T<175-302 i193 T>383-510 i431 i480 p382 T>617-752 i640 p616 T<800-970 i876 p969 T<970-1080 p1078 T>1175-1280 w1226 i1221 i1231 p1174 T<1331-1474 w1382 p1472',
      'T>-40-130 i53 i76 T<193-355 T>457-612 w468 w496 p456 T<645-806 i708 w797 p804 T>838-932 i848 i857 i876 i883 i896 i909 p837 T>951-1072 p951 i957 T<1168-1301 w1286 p1299 T>1386-1506 i1462 p1385',
      'T>-40-26 T<193-318 p317 T>472-604 w522 w552 p472 T<842-1016 w861 w890 p1014 T>1028-1163 i1058 p1027'] }
];

const paint = {
  G: '#d3dcd3', N: '#d1d1d1', T: '#c9c9c9', r: '#ea3323', b: '#0000f6', k: '#949694', w: '#fff', p: '#ea338b',
  d: '#959995', c: '#000', s: '#d98379', q: '#d6c4bb', l: '#8d90de', v: '#6fe35a', e: '#c48a45'
};
const barPaint = { r: '#ea3323', b: '#0000f6', v: '#3f9a20', o: '#c27a2c' };
const INS = '#6a1fd0';

function coverage(blocks) {
  let s = '', path = '';
  for (const t of blocks) {
    const n = t.cov.split(' ').map(Number);
    for (let i = 0; i < n.length; i += 2) {
      const x = even(t.x0 + n[i] * t.k), e = even(t.x0 + (n[i + 2] ?? t.end) * t.k), y = Math.round(610 + n[i + 1] / 3);
      path += `M${x} 700V${y}H${e}V700z`;
    }
    for (const [, x, c] of t.bars.matchAll(/(\d+)((?:[a-z]\d+)+)/g)) {
      for (const [, f, y] of c.matchAll(/([a-z])(\d+)/g)) {
        const top = Math.round(610 + y / 3);
        s += rect(even(t.x0 + x * t.k), top, 2, 700 - top, barPaint[f]);
      }
    }
  }
  return `<path d="${path}" fill="#afafaf"/>` + s + rect(326, 700, 2272, 2, '#808080');
}

function tips() {
  let d = '';
  for (const t of normal)
    for (const a of t.tips.split(' ')) {
      const x = Math.round(t.x0 + a * t.k);
      d += `M${x - 12} 715h24l-12 18z`;
    }
  return `<path d="${d}" fill="${INS}"/>`;
}

function reads(t) {
  let s = '';
  t.rows.forEach((row, r) => {
    const y = 737 + 28 * r;
    for (const [, c, dir, a, b] of row.matchAll(/([A-Za-z])([<>|]?)(-?\d+)(?:-(\d+))?/g)) {
      const x = even(t.x0 + a * t.k), e = b ? Math.max(even(t.x0 + b * t.k), x + 2) : x + 2;
      if (dir === '<') s += `<path d="M${x} ${y + 12}l10-12H${e}v24H${x + 10}z" fill="${paint[c]}"/>`;
      else if (dir === '>') s += `<path d="M${e} ${y + 12}l-10-12H${x}v24H${e - 10}z" fill="${paint[c]}"/>`;
      else if (c === 'i') s += rect(x - 6, y, 12, 4, INS) + rect(x - 2, y, 4, 24, INS) + rect(x - 6, y + 20, 12, 4, INS);
      else if (c === 'o') s += `<path d="M${x} ${y + 12}L${e} ${y}v24z" fill="#c5cdc3" opacity=".65"/>`;
      else if (c === 'O') s += `<path d="M${x} ${y + 12}L${(x + e) / 2} ${y + 2}L${e} ${y + 12}L${(x + e) / 2} ${y + 22}z" fill="${t.tips ? '#c5cdc3' : '#b9b9b9'}" opacity=".8"/>`;
      else if (c === 'x') s += `<path d="M${e} ${y}L${x + 1} ${y + 12}L${e} ${y + 24}" fill="none" stroke="${paint.p}" stroke-width="2"/>`;
      else if (c === 'd' || c === 'c') s += rect(x, y + 10, Math.max(e - x, c === 'd' ? 4 : 2), 4, paint[c]);
      else if (c === 'p') s += rect(x, y - 1, e - x, 24, paint.p);
      else s += rect(x, y, e - x, 24, paint[c]);
    }
  });
  return s;
}

document.querySelectorAll('.bam').forEach(el => {
  const blocks = el.classList.contains('tumor') ? tumor : normal;
  svg(el, rect(326, 621, 22, 260, '#fff') + rect(326, 621, 1089, 2, '#c6c6c6')
    + coverage(blocks) + tips() + blocks.map(reads).join('') + guides(621, 260));
});
```
